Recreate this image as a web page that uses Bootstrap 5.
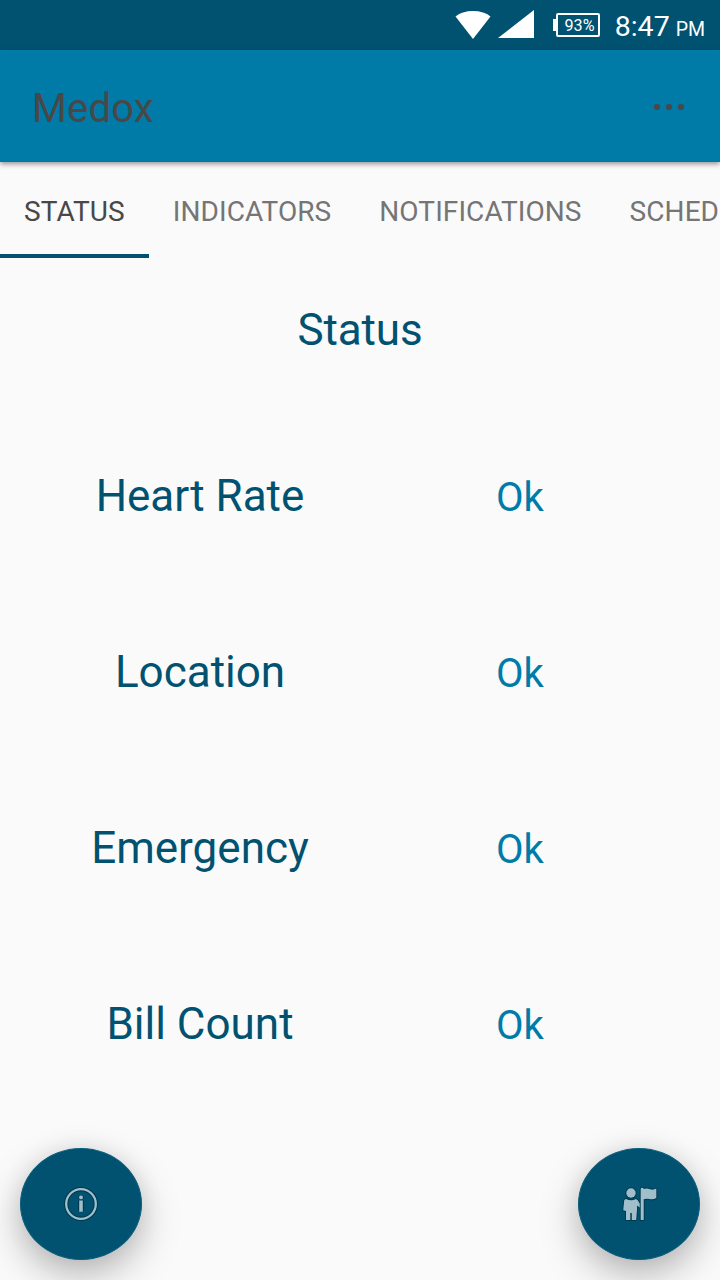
<!DOCTYPE html>
<html lang="en">
<head>
<meta charset="utf-8">
<meta name="viewport" content="width=device-width, initial-scale=1">
<title>Medox</title>
<link href="https://cdn.jsdelivr.net/npm/bootstrap@5.3.0/dist/css/bootstrap.min.css" rel="stylesheet">
<style>
:root { --deep: #005270; --primary: #007aa7; --ink: #484848; }
body { font-family: Roboto, "Noto Sans", sans-serif; background: #fafafa; line-height: 1.172; }
.screen { width: 720px; height: 1280px; }
.status-bar { height: 50px; background: var(--deep); color: #fff; padding-right: 15px; }
.clock { font-size: 28.5px; padding-left: 15px; }
.clock .meridiem { font-size: 19.5px; margin-left: 6px; }
.app-bar { height: 112px; background: var(--primary); color: var(--ink); padding: 6px 35px 0 32px; box-shadow: 0 2px 5px rgba(0,0,0,.42); z-index: 1; }
.app-title { font-size: 40px; color: var(--ink); letter-spacing: .15px; }
.tab-strip { height: 96px; font-size: 28px; letter-spacing: .08px; }
.tab-strip .nav-link { color: #757575; padding: 8px 24px 0; border-bottom: 4px solid transparent; display: flex; align-items: center; white-space: nowrap; }
.tab-strip .nav-link.active { color: var(--ink); border-bottom-color: var(--deep); }
.heading { height: 151px; padding-top: 46px; font-size: 44px; color: var(--deep); letter-spacing: -.1px; }
.status-row { height: 176px; }
.item-name { width: 400px; font-size: 44px; color: var(--deep); }
.item-state { width: 240px; font-size: 40px; color: var(--primary); }
.fab-row { height: 167px; padding: 35px 20px 20px; }
.fab { width: 122px; height: 112px; border-radius: 50%; background: var(--deep); border: 1px solid #0a5f7d; box-shadow: 0 16px 38px rgba(0,0,0,.26), 0 0 24px rgba(0,0,0,.08); }
</style>
</head>
<body>
<div class="screen d-flex flex-column overflow-hidden">
  <div class="status-bar d-flex align-items-center justify-content-end flex-shrink-0">
    <svg width="150" height="50" viewBox="0 0 150 50" fill="#fff">
      <path d="M5.5 16.5Q12 11 23 11T40.500 16.500L23 39Z"/>
      <path d="M48 38L84 10V38Z"/>
      <path d="M103 19h3v-4q0-2 2-2h40q2 0 2 2v20q0 2-2 2h-40q-2 0-2-2v-4h-3zM108 15v20h40V15z" fill-rule="evenodd"/>
      <text x="114.500" y="31" font-size="16" textLength="30" lengthAdjust="spacingAndGlyphs">93%</text>
    </svg>
    <div class="clock d-flex align-items-baseline pt-1 text-nowrap"><span>8:47</span><span class="meridiem">PM</span></div>
  </div>
  <header class="app-bar d-flex align-items-center justify-content-between flex-shrink-0 position-relative">
    <h1 class="app-title fw-normal mb-0">Medox</h1>
    <svg width="32" height="8" viewBox="0 0 32 8" fill="#484848" class="mb-1"><circle cx="4" cy="4" r="3.100"/><circle cx="16" cy="4" r="3.100"/><circle cx="28" cy="4" r="3.100"/></svg>
  </header>
  <nav class="tab-strip nav flex-nowrap flex-shrink-0 overflow-hidden">
    <a class="nav-link active" href="#">STATUS</a>
    <a class="nav-link" href="#">INDICATORS</a>
    <a class="nav-link" href="#">NOTIFICATIONS</a>
    <a class="nav-link" href="#">SCHEDULE</a>
  </nav>
  <main class="flex-shrink-0">
    <h2 class="heading fw-normal text-center mb-0">Status</h2>
    <div class="status-row d-flex align-items-center"><div class="d-flex align-items-baseline text-center"><div class="item-name">Heart Rate</div><div class="item-state">Ok</div></div></div>
    <div class="status-row d-flex align-items-center"><div class="d-flex align-items-baseline text-center"><div class="item-name">Location</div><div class="item-state">Ok</div></div></div>
    <div class="status-row d-flex align-items-center"><div class="d-flex align-items-baseline text-center"><div class="item-name">Emergency</div><div class="item-state">Ok</div></div></div>
    <div class="status-row d-flex align-items-center"><div class="d-flex align-items-baseline text-center"><div class="item-name">Bill Count</div><div class="item-state">Ok</div></div></div>
  </main>
  <footer class="fab-row d-flex justify-content-between flex-shrink-0">
    <button class="fab d-flex align-items-center justify-content-center p-0" aria-label="Information">
      <svg width="40" height="40" viewBox="0 0 40 40">
        <g stroke="#003a50" stroke-width="4.400" fill="none"><circle cx="20" cy="20" r="14.800"/><path d="M20 16.500v10.500M20 12.500v1.500" stroke-width="6"/></g>
        <circle cx="20" cy="20" r="14.800" fill="none" stroke="#a0bfcb" stroke-width="2.300"/>
        <circle cx="20" cy="13.300" r="1.900" fill="#a0bfcb"/><path d="M18.200 16.500h3.600v11.200h-3.600z" fill="#a0bfcb"/>
      </svg>
    </button>
    <button class="fab d-flex align-items-center justify-content-center p-0" aria-label="Guide">
      <svg width="40" height="40" viewBox="0 0 40 40" fill="#a0bfcb" stroke="#003a50" stroke-width="2" stroke-linejoin="round" paint-order="stroke">
        <path d="M7 15Q12 17.500 17 15Q19 15.500 20 18.500L22 20.500V24.500L18 21.500V25.500L17.200 36H12.800V29H11.300V36H7V27L4.200 26.300L5.200 16.500Q5.500 15.300 7 15Z"/>
        <circle cx="12" cy="9" r="4.700"/>
        <path d="M21.700 4.800Q21.700 3.800 23.200 3.800T24.700 5Q28 4 31 5.200T37.300 4.500V14Q34 15.800 30.500 15T24.700 15.300V36H21.700Z"/>
      </svg>
    </button>
  </footer>
</div>
<script src="https://cdn.jsdelivr.net/npm/bootstrap@5.3.0/dist/js/bootstrap.bundle.min.js"></script>
</body>
</html>
